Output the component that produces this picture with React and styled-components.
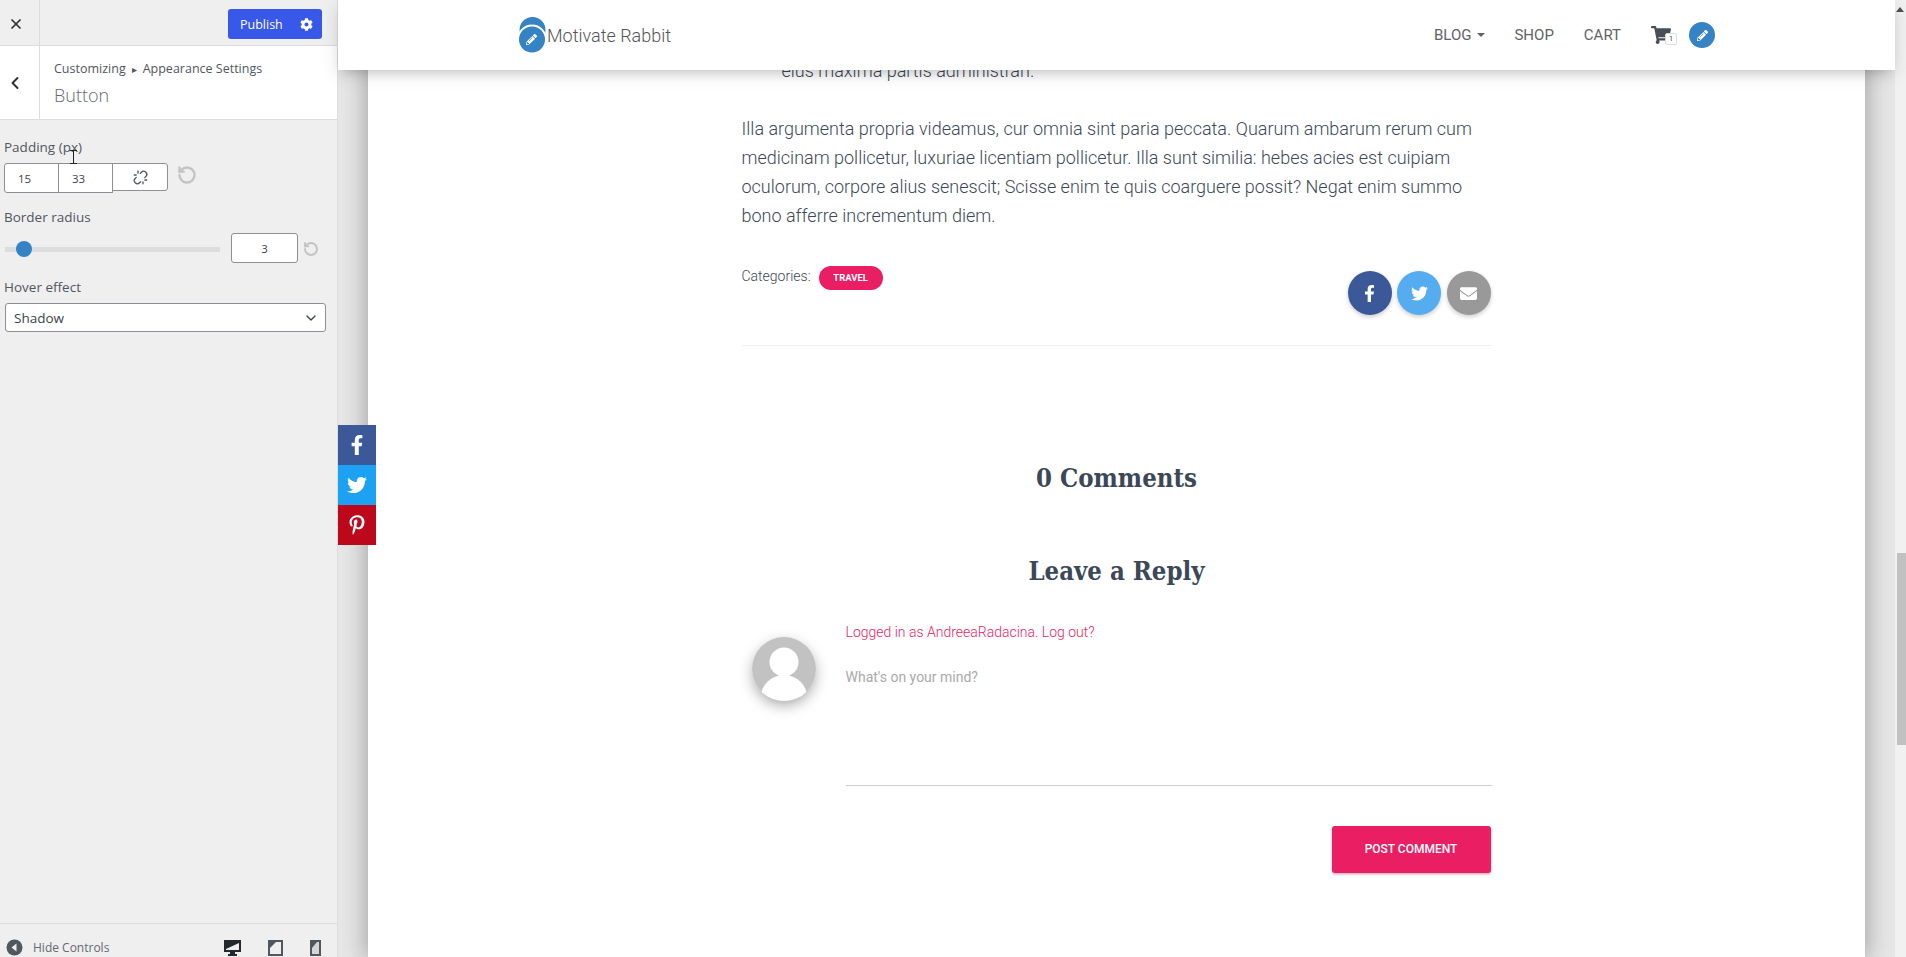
import React from "react";
import styled, { createGlobalStyle } from "styled-components";
import {
  FaCog,
  FaEnvelope,
  FaFacebookF,
  FaPencilAlt,
  FaPinterestP,
  FaShoppingCart,
  FaTwitter,
} from "react-icons/fa";
import { ChevronDown, ChevronLeft, RotateCcw, Unlink, X } from "lucide-react";

const GlobalStyle = createGlobalStyle`
  html, body {
    margin: 0;
    padding: 0;
    height: 100%;
    overflow: hidden;
    background: #fff;
  }
  * { box-sizing: border-box; }
`;

const Shell = styled.div`
  display: flex;
  width: 1906px;
  height: 957px;
  overflow: hidden;
`;

/* customizer panel */
const Sidebar = styled.aside`
  display: flex;
  flex-direction: column;
  flex: 0 0 338px;
  height: 957px;
  background: #efefef;
  border-right: 1px solid #ddd;
  font-family: "Open Sans", "Noto Sans", sans-serif;
  color: #50575e;
`;

const TopBar = styled.div`
  display: flex;
  align-items: center;
  height: 46px;
  border-bottom: 1px solid #ddd;
  padding-right: 15px;
`;

const CloseButton = styled.div`
  display: flex;
  align-items: center;
  justify-content: center;
  width: 40px;
  height: 45px;
  padding: 2px 8px 0 0;
  border-right: 1px solid #ddd;
  color: #2c3338;
`;

const PublishButton = styled.div`
  display: flex;
  align-items: center;
  justify-content: space-between;
  margin: 3px 0 0 auto;
  width: 94px;
  height: 30px;
  padding: 0 9px 0 12px;
  background: #3858e9;
  border-radius: 3px;
  color: #fff;
  font-size: 12.5px;
  font-weight: 500;
`;

const SectionHeader = styled.div`
  display: flex;
  height: 74px;
  background: #fff;
  border-bottom: 1px solid #ddd;
`;

const BackButton = styled.div`
  display: flex;
  align-items: center;
  justify-content: center;
  width: 40px;
  padding-right: 9px;
  border-right: 1px solid #ddd;
  color: #2c3338;
`;

const SectionTitle = styled.div`
  padding: 14px 0 0 14px;
`;

const Crumbs = styled.div`
  display: flex;
  align-items: center;
  gap: 6px;
  font-size: 12.5px;
  line-height: 18px;
  color: #50575e;
`;

const CrumbArrow = styled.span`
  font-size: 10px;
`;

const SectionName = styled.div`
  margin-top: 5px;
  font-size: 18px;
  font-weight: 300;
  line-height: 24px;
  color: #646970;
`;

const Controls = styled.div`
  display: flex;
  flex-direction: column;
  padding: 18px 11px 0 4px;
`;

const ControlLabel = styled.div`
  font-size: 13.5px;
  font-weight: 500;
  line-height: 18px;
  margin-top: ${(props) => props.$top || 0}px;
  color: #50575e;
`;

const ControlRow = styled.div`
  display: flex;
  align-items: center;
  margin-top: ${(props) => props.$top || 0}px;
`;

const NumberCell = styled.div`
  display: flex;
  align-items: center;
  justify-content: ${(props) => (props.$center ? "center" : "flex-start")};
  width: ${(props) => props.$width}px;
  height: 30px;
  padding-left: ${(props) => (props.$center ? 0 : 13)}px;
  background: #fff;
  border: 1px solid #8c8f94;
  border-radius: ${(props) => props.$radius || "0"};
  margin-left: ${(props) => props.$gap || 0}px;
  font-size: 11.5px;
  color: #3c434a;
`;

const LinkCell = styled.div`
  display: flex;
  align-items: center;
  justify-content: center;
  align-self: flex-start;
  width: 56px;
  height: 28px;
  margin-left: -1px;
  background: #fff;
  border: 1px solid #8c8f94;
  border-radius: 0 3px 3px 0;
  color: #50575e;
`;

const ResetIcon = styled(RotateCcw)`
  color: #c3c3c3;
  margin: ${(props) => props.$up || 0}px 0 0 ${(props) => props.$gap}px;
`;

const SliderTrack = styled.div`
  position: relative;
  flex: 0 0 215px;
  height: 5px;
  margin: 2px 0 0 1px;
  background: #ddd;
`;

const SliderThumb = styled.div`
  position: absolute;
  top: -6px;
  left: 11px;
  width: 16px;
  height: 16px;
  border-radius: 50%;
  background: #3582c4;
`;

const SelectBox = styled.div`
  display: flex;
  align-items: center;
  justify-content: space-between;
  height: 29px;
  margin: 7px 0 0 1px;
  padding: 0 6px 0 8px;
  background: #fff;
  border: 1px solid #8c8f94;
  border-radius: 3px;
  font-size: 13.5px;
  color: #3c434a;
`;

const Footer = styled.div`
  display: flex;
  align-items: center;
  margin-top: auto;
  height: 34px;
  border-top: 1px solid #ddd;
  padding: 14px 16px 0 6px;
`;

const HideLabel = styled.span`
  margin-left: 10px;
  font-size: 12px;
  color: #646970;
`;

const DeviceGroup = styled.div`
  display: flex;
  align-items: center;
  gap: 27px;
  margin-left: auto;
`;

const Cursor = styled.svg`
  position: absolute;
  left: 69px;
  top: 150px;
`;

/* site preview */
const Preview = styled.div`
  position: relative;
  display: flex;
  flex: 1;
  min-width: 0;
`;

const Backdrop = styled.div`
  flex: 1;
  min-width: 0;
  height: 957px;
  overflow: hidden;
  padding: 0 30px;
  background: #e6e6e6;
`;

const Card = styled.main`
  height: 957px;
  padding-top: 56px;
  background: #fff;
  box-shadow: 0 0 22px 2px rgba(0, 0, 0, 0.3);
  font-family: Roboto, sans-serif;
  color: #3c4858;
`;

const Article = styled.article`
  width: 750px;
  margin: 0 auto;
`;

const Bullet = styled.div`
  padding-left: 40px;
  font-size: 18px;
  font-weight: 300;
  line-height: 29px;
`;

const Paragraph = styled.p`
  margin: 29px 0 0;
  font-size: 18px;
  font-weight: 300;
  line-height: 29px;
`;

const MetaRow = styled.div`
  display: flex;
  justify-content: space-between;
  margin-top: 36px;
  padding-bottom: 30px;
  border-bottom: 1px solid #eee;
`;

const Categories = styled.div`
  display: flex;
  align-items: flex-start;
  gap: 8px;
  font-size: 14px;
  font-weight: 300;
  line-height: 20px;
`;

const Tag = styled.span`
  width: 64px;
  height: 24px;
  border-radius: 12px;
  background: #e91e63;
  color: #fff;
  font-size: 9.5px;
  font-weight: 700;
  line-height: 24px;
  text-align: center;
`;

const ShareGroup = styled.div`
  display: flex;
  gap: 5.5px;
  margin: 5px 1px 0 0;
`;

const ShareButton = styled.div`
  display: flex;
  align-items: center;
  justify-content: center;
  width: 44px;
  height: 44px;
  border-radius: 50%;
  background: ${(props) => props.$color};
  color: #fff;
  font-size: 17px;
  box-shadow: 0 2px 4px rgba(0, 0, 0, 0.2);
`;

const Heading = styled.h3`
  margin: ${(props) => props.$top}px 0 0;
  font-family: "DejaVu Serif Condensed", "DejaVu Serif", serif;
  font-size: 25.5px;
  font-weight: 700;
  line-height: 36px;
  text-align: center;
  color: #3c4858;
`;

const ReplyRow = styled.div`
  display: flex;
  margin-top: 33px;
`;

const Avatar = styled.div`
  flex: 0 0 64px;
  width: 64px;
  height: 64px;
  margin: 15px 30px 0 10px;
  border-radius: 50%;
  overflow: hidden;
  box-shadow: 0 5px 15px -2px rgba(0, 0, 0, 0.4);
`;

const ReplyBody = styled.div`
  flex: 1;
`;

const LoggedIn = styled.div`
  font-size: 14px;
  font-weight: 300;
  line-height: 20px;
  color: #e91e63;
`;

const CommentField = styled.div`
  height: 144px;
  padding-top: 25px;
  border-bottom: 1px solid #cfcfcf;
  font-size: 14px;
  line-height: 20px;
  color: #aaa;
`;

const SubmitRow = styled.div`
  display: flex;
  justify-content: flex-end;
  margin-top: 40px;
`;

const SubmitButton = styled.div`
  display: flex;
  align-items: center;
  justify-content: center;
  width: 159px;
  height: 47px;
  margin-right: 1px;
  padding-bottom: 2px;
  border-radius: 3px;
  background: #e91e63;
  color: #fff;
  font-size: 12px;
  font-weight: 500;
  box-shadow: 0 2px 2px rgba(233, 30, 99, 0.2), 0 1px 3px rgba(0, 0, 0, 0.15);
`;

const Scrollbar = styled.div`
  position: relative;
  flex: 0 0 11px;
  background: #f1f1f1;
`;

const ScrollThumb = styled.div`
  position: absolute;
  top: 553px;
  left: 2px;
  width: 9px;
  height: 192px;
  background: #c1c1c1;
`;

const ScrollArrow = styled.div`
  position: absolute;
  top: 7px;
  left: 1px;
  border: 4.5px solid transparent;
  border-top: 0;
  border-bottom: 5px solid #505050;
`;

const NavBar = styled.header`
  position: absolute;
  top: 0;
  left: 0;
  right: 11px;
  display: flex;
  align-items: center;
  height: 70px;
  padding: 0 180px 0 181px;
  background: #fff;
  box-shadow: 0 4px 18px rgba(0, 0, 0, 0.12), 0 7px 10px -5px rgba(0, 0, 0, 0.15);
  font-family: Roboto, sans-serif;
`;

const Brand = styled.div`
  display: flex;
  align-items: center;
  gap: 1px;
  font-size: 18px;
  font-weight: 300;
  color: #555;
`;

const NavLinks = styled.nav`
  display: flex;
  align-items: center;
  margin-left: auto;
  font-size: 15px;
  color: #5f6368;
`;

const NavLink = styled.span`
  display: flex;
  align-items: center;
  gap: 6px;
  margin-right: ${(props) => props.$gap}px;
`;

const Caret = styled.span`
  border: 4.5px solid transparent;
  border-bottom: 0;
  border-top: 4px solid #5f6368;
`;

const CartWrap = styled.div`
  position: relative;
  display: flex;
  width: 26px;
  margin-right: 12px;
  color: #4a4f55;
  font-size: 20px;
`;

const CartBadge = styled.span`
  position: absolute;
  top: 8px;
  left: 14px;
  width: 12px;
  height: 12px;
  background: #fff;
  border: 1px solid #ddd;
  border-radius: 2px;
  font-size: 8px;
  line-height: 10px;
  text-align: center;
  color: #555;
`;

const EditBubble = styled.div`
  display: flex;
  align-items: center;
  justify-content: center;
  width: 26px;
  height: 26px;
  border-radius: 50%;
  background: #3582c4;
  color: #fff;
  font-size: 11px;
`;

const SocialRail = styled.div`
  position: absolute;
  top: 425px;
  left: 0;
  display: flex;
  flex-direction: column;
  width: 38px;
`;

const RailItem = styled.div`
  display: flex;
  align-items: center;
  justify-content: center;
  height: 40px;
  background: ${(props) => props.$color};
  color: #fff;
  font-size: 20px;
`;

const Logo = () => (
  <svg width="27" height="36" viewBox="0 0 27 36">
    <circle cx="13.5" cy="13" r="13" fill="#3582c4" />
    <circle cx="13" cy="22.5" r="15" fill="#fff" />
    <circle cx="13" cy="22.5" r="13" fill="#3582c4" />
    <FaPencilAlt x="7" y="17" size="11" color="#fff" />
  </svg>
);

const HideIcon = () => (
  <svg width="17" height="17" viewBox="0 0 17 17">
    <circle cx="8.5" cy="8.5" r="8" fill="#50575e" />
    <path d="M10.5 4.5v8l-5-4z" fill="#efefef" />
  </svg>
);

const DesktopIcon = () => (
  <svg width="17" height="16" viewBox="0 0 17 16">
    <path d="M0 0h17v12h-6v2h2v2H4v-2h2v-2H0z" fill="#23282d" />
    <path d="M2 2h13v8H2z" fill="#efefef" />
    <path d="M2 2h13v1L2 9z" fill="#23282d" />
  </svg>
);

const TabletIcon = () => (
  <svg width="15" height="16" viewBox="0 0 15 16">
    <path d="M0 0h15v16H0z" fill="#50575e" />
    <path d="M2 2h11v12H2z" fill="#efefef" />
    <path d="M2 2h6L2 8z" fill="#50575e" />
  </svg>
);

const PhoneIcon = () => (
  <svg width="11" height="16" viewBox="0 0 11 16">
    <path d="M0 0h11v16H0z" fill="#50575e" />
    <path d="M2 2h7v12H2z" fill="#d5d5d5" />
    <path d="M2 2h5L2 8z" fill="#50575e" />
  </svg>
);

const AvatarArt = () => (
  <svg width="64" height="64" viewBox="0 0 64 64">
    <rect width="64" height="64" fill="#c2c2c2" />
    <circle cx="32" cy="25" r="14.5" fill="#fff" />
    <ellipse cx="32" cy="60" rx="23" ry="22" fill="#fff" />
  </svg>
);

const App = () => (
  <Shell>
    <GlobalStyle />
    <Sidebar>
      <TopBar>
        <CloseButton>
          <X size={16} strokeWidth={2.6} />
        </CloseButton>
        <PublishButton>
          Publish
          <FaCog size={13} />
        </PublishButton>
      </TopBar>
      <SectionHeader>
        <BackButton>
          <ChevronLeft size={20} strokeWidth={2.4} />
        </BackButton>
        <SectionTitle>
          <Crumbs>
            Customizing <CrumbArrow>▸</CrumbArrow> Appearance Settings
          </Crumbs>
          <SectionName>Button</SectionName>
        </SectionTitle>
      </SectionHeader>
      <Controls>
        <ControlLabel>Padding (px)</ControlLabel>
        <ControlRow $top={7}>
          <NumberCell $width={55} $radius="3px 0 0 3px">15</NumberCell>
          <NumberCell $width={55} $gap={-1}>33</NumberCell>
          <LinkCell>
            <Unlink size={15} strokeWidth={2.1} />
          </LinkCell>
          <ResetIcon size={20} strokeWidth={2.8} $gap={9} $up={-6} />
        </ControlRow>
        <ControlLabel $top={15}>Border radius</ControlLabel>
        <ControlRow $top={7}>
          <SliderTrack>
            <SliderThumb />
          </SliderTrack>
          <NumberCell $width={67} $gap={11} $center $radius="3px">3</NumberCell>
          <ResetIcon size={16} strokeWidth={2.8} $gap={5} $up={2} />
        </ControlRow>
        <ControlLabel $top={15}>Hover effect</ControlLabel>
        <SelectBox>
          Shadow
          <ChevronDown size={16} />
        </SelectBox>
      </Controls>
      <Footer>
        <HideIcon />
        <HideLabel>Hide Controls</HideLabel>
        <DeviceGroup>
          <DesktopIcon />
          <TabletIcon />
          <PhoneIcon />
        </DeviceGroup>
      </Footer>
    </Sidebar>
    <Cursor width="9" height="14" viewBox="0 0 9 14">
      <path d="M1 .5h7M4.5.5v13M1 13.5h7" stroke="#222" fill="none" />
    </Cursor>

    <Preview>
      <Backdrop>
        <Card>
          <Article>
            <Bullet>eius maxima partis administran.</Bullet>
            <Paragraph>
              Illa argumenta propria videamus, cur omnia sint paria peccata. Quarum ambarum rerum cum
              medicinam pollicetur, luxuriae licentiam pollicetur. Illa sunt similia: hebes acies est cuipiam
              oculorum, corpore alius senescit; Scisse enim te quis coarguere possit? Negat enim summo bono
              afferre incrementum diem.
            </Paragraph>
            <MetaRow>
              <Categories>
                Categories:
                <Tag>TRAVEL</Tag>
              </Categories>
              <ShareGroup>
                <ShareButton $color="#3b5998">
                  <FaFacebookF />
                </ShareButton>
                <ShareButton $color="#55acee">
                  <FaTwitter />
                </ShareButton>
                <ShareButton $color="#999">
                  <FaEnvelope />
                </ShareButton>
              </ShareGroup>
            </MetaRow>
            <Heading $top={114}>0 Comments</Heading>
            <Heading $top={57}>Leave a Reply</Heading>
            <ReplyRow>
              <Avatar>
                <AvatarArt />
              </Avatar>
              <ReplyBody>
                <LoggedIn>Logged in as AndreeaRadacina. Log out?</LoggedIn>
                <CommentField>What's on your mind?</CommentField>
                <SubmitRow>
                  <SubmitButton>POST COMMENT</SubmitButton>
                </SubmitRow>
              </ReplyBody>
            </ReplyRow>
          </Article>
        </Card>
      </Backdrop>
      <Scrollbar>
        <ScrollArrow />
        <ScrollThumb />
      </Scrollbar>

      <NavBar>
        <Brand>
          <Logo />
          Motivate Rabbit
        </Brand>
        <NavLinks>
          <NavLink $gap={29}>
            BLOG <Caret />
          </NavLink>
          <NavLink $gap={30}>SHOP</NavLink>
          <NavLink $gap={30}>CART</NavLink>
          <CartWrap>
            <FaShoppingCart />
            <CartBadge>1</CartBadge>
          </CartWrap>
          <EditBubble>
            <FaPencilAlt />
          </EditBubble>
        </NavLinks>
      </NavBar>

      <SocialRail>
        <RailItem $color="#3b5998">
          <FaFacebookF />
        </RailItem>
        <RailItem $color="#1da1f2">
          <FaTwitter />
        </RailItem>
        <RailItem $color="#bd081c">
          <FaPinterestP />
        </RailItem>
      </SocialRail>
    </Preview>
  </Shell>
);

export default App;
